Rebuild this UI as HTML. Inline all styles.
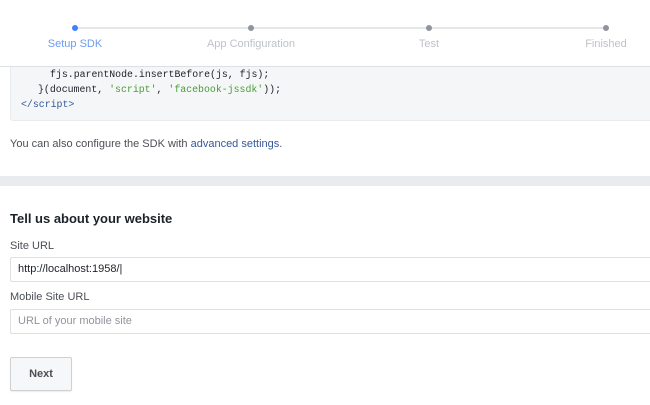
<!DOCTYPE html>
<html><head><meta charset="utf-8"><style>
*{margin:0;padding:0;box-sizing:border-box}
body{width:650px;height:405px;overflow:hidden;background:#fff;font-family:"Liberation Sans",Arial,sans-serif;position:relative;color:#4b4f56}
.hdr{position:absolute;left:0;top:0;width:650px;height:67px;background:#fff;border-bottom:1px solid #dddfe2;z-index:2}
.line{position:absolute;top:27px;left:75px;width:531px;height:2px;background:#e4e6ea}
.dot{position:absolute;top:25px;width:6px;height:6px;border-radius:50%;background:#90949c}
.lbl{position:absolute;top:38px;font-size:11px;color:#bec2c9;transform:translateX(-50%);white-space:nowrap}
.code{position:absolute;left:10px;top:60px;width:650px;height:61px;background:#f5f6f7;border:1px solid #e9ebee;border-radius:3px;font-family:"Liberation Mono",monospace;font-size:9.9px;color:#1d2129;white-space:pre;line-height:15px;padding-top:6px}
.code div{position:absolute}
.s{color:#42b72a;color:#4a9d3a}
.t{color:#365899}
.p{position:absolute;left:10px;top:138px;font-size:11px;color:#4b4f56}
.p a{color:#365899;text-decoration:none}
.band{position:absolute;left:0;top:176px;width:650px;height:10px;background:#e9ebee}
h2{position:absolute;left:10px;top:211px;font-size:13px;font-weight:bold;color:#1d2129}
.fl{position:absolute;left:10px;font-size:11px;color:#4b4f56}
.in{position:absolute;left:10px;width:650px;height:25px;border:1px solid #dddfe2;border-radius:2px;font-size:11px;padding:0 7px;line-height:23px}
.btn{position:absolute;left:10px;top:357px;width:62px;height:34px;border:1px solid #ced0d4;border-radius:2px;background:#f6f7f9;font-size:11px;font-weight:bold;color:#4b4f56;text-align:center;line-height:32px;box-shadow:0 1px 1px rgba(0,0,0,.08)}
</style></head><body>
<div class="hdr">
<div class="line"></div>
<div class="dot" style="left:72px;background:#4080ff"></div>
<div class="dot" style="left:248px"></div>
<div class="dot" style="left:426px"></div>
<div class="dot" style="left:603px"></div>
<div class="lbl" style="left:75px;color:#6d9af0">Setup SDK</div>
<div class="lbl" style="left:251px">App Configuration</div>
<div class="lbl" style="left:429px">Test</div>
<div class="lbl" style="left:606px">Finished</div>
</div>
<div class="code">
<div style="left:39px;top:6px">fjs.parentNode.insertBefore(js, fjs);</div>
<div style="left:27px;top:21px">}(document, <span class="s">'script'</span>, <span class="s">'facebook-jssdk'</span>));</div>
<div style="left:10px;top:36px"><span class="t">&lt;/script&gt;</span></div>
</div>
<div class="p">You can also configure the SDK with <a>advanced settings</a>.</div>
<div class="band"></div>
<h2>Tell us about your website</h2>
<div class="fl" style="top:240px">Site URL</div>
<div class="in" style="top:257px;color:#1d2129">http://localhost:1958/|</div>
<div class="fl" style="top:291px">Mobile Site URL</div>
<div class="in" style="top:309px;color:#90949c">URL of your mobile site</div>
<div class="btn">Next</div>
</body></html>
